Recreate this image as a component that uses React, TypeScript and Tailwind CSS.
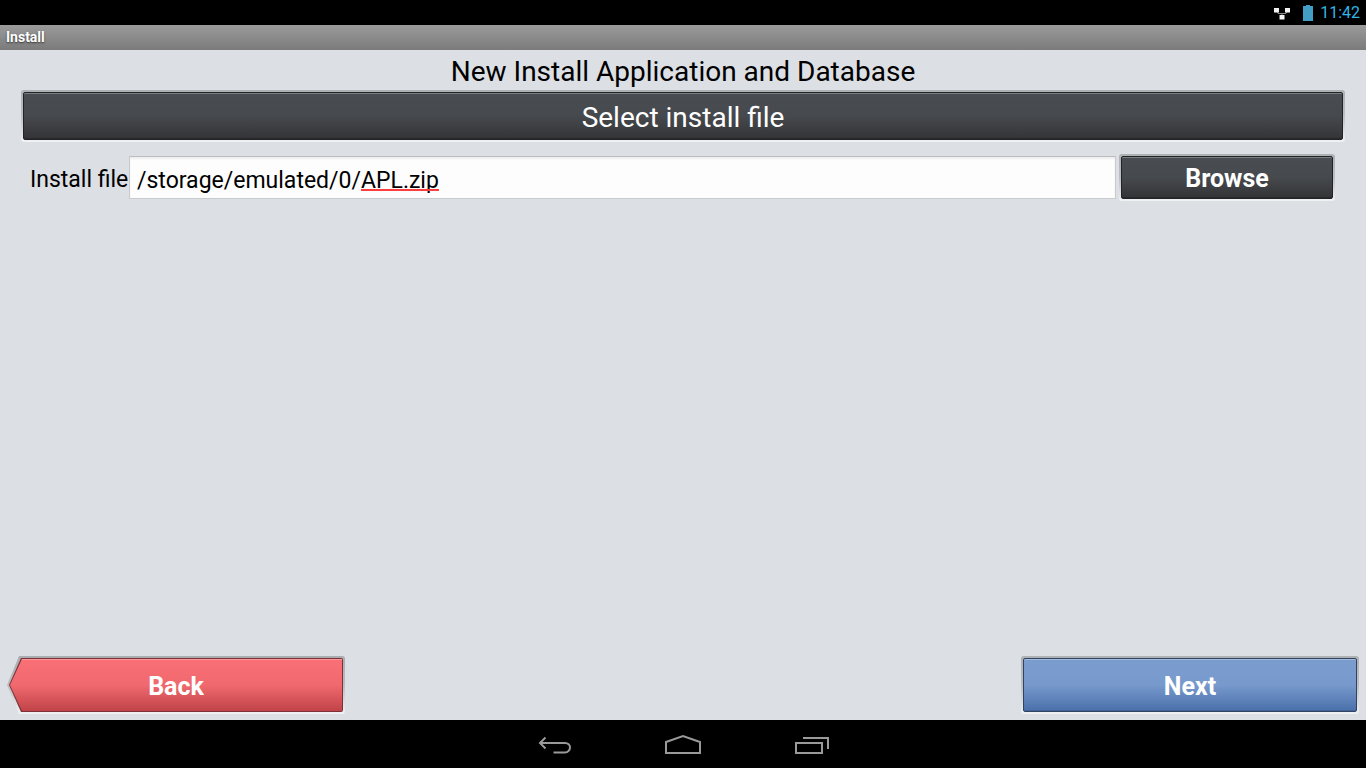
import React from "react";

const StatusBar = () => (
    <div className="flex h-[25px] items-center justify-end bg-black pr-[6px] text-[#33b5e5]">
        <svg className="h-[14px] w-[18px]" viewBox="0 0 18 14" fill="none">
            <path d="M3.500 5L5 7.500H13L14.500 5M9 7.500V10" stroke="#8a8a8a" />
            <path d="M1 2h5v4.500H1zM12 2h5v4.500h-5zM6.500 9h5v4.500h-5z" fill="#f2f2f2" />
        </svg>
        <svg className="ml-3 h-4 w-[10px]" viewBox="0 0 10 16">
            <path d="M3 0h4v1h3v15H0V1h3z" fill="#429ec5" />
        </svg>
        <span className="ml-[7px] text-base leading-6">11:42</span>
    </div>
);

type PanelButtonProps = {
    children: React.ReactNode;
    className?: string;
    tone?: "dark" | "blue";
};

// bevelled button: grey shadow on top, white glow below, thin dark outline
const PanelButton = ({ children, className = "", tone = "dark" }: PanelButtonProps) => {
    const face =
        tone === "dark"
            ? "border-[#222327] bg-linear-to-b from-[#494c50] via-[#46494d] to-[#343437] shadow-[inset_0_1px_0_#7b7f80,inset_0_-1px_0_#29292c]"
            : "border-[#32435f] bg-linear-to-b from-[#7b9dce] via-[#7799cc] to-[#4a70aa] shadow-[inset_0_1px_0_#a3bbdd,inset_0_-1px_0_#40639a]";
    return (
        <button
            type="button"
            className={`block rounded-[3px] bg-linear-to-b from-[#adb1b4] via-[#bcbfc3] to-[#f1f2f4] p-[2px] text-white ${className}`}
        >
            <span className={`flex h-full items-center justify-center rounded-[2px] border pt-[3px] ${face}`}>{children}</span>
        </button>
    );
};

const BackButton = () => (
    <button
        type="button"
        className="h-[58px] w-1/4 rounded-r-[3px] bg-linear-to-b from-[#a9adb0] via-[#babdc0] to-[#f1f2f4] p-[2px] text-[25px] font-bold text-white [clip-path:polygon(12px_0,100%_0,100%_100%,12px_100%,0_50%)]"
    >
        <span className="block h-full rounded-r-[2px] bg-[#7d3239] p-[1px] [clip-path:polygon(12px_0,100%_0,100%_100%,12px_100%,0_50%)]">
            <span className="flex h-full items-center justify-center bg-linear-to-b from-[#f97077] via-[#f0696e] to-[#c14448] pt-[3px] shadow-[inset_0_1px_0_#fb969b] [clip-path:polygon(12px_0,100%_0,100%_100%,12px_100%,0_50%)]">
                Back
            </span>
        </span>
    </button>
);

const NavBar = () => (
    <nav className="flex h-12 items-center justify-center gap-[93px] bg-black text-[#9a9a9a]">
        <button type="button" aria-label="Back">
            <svg className="h-6 w-9" viewBox="0 0 36 24" fill="none" stroke="currentColor" strokeWidth="2">
                <path d="M9.500 5.500L4 11L9.500 16.500M4 11H29C32 11 34 13 34 15.500S32 20.500 29 20.500H17.500" />
            </svg>
        </button>
        <button type="button" aria-label="Home">
            <svg className="h-6 w-9" viewBox="0 0 36 24" fill="none" stroke="currentColor" strokeWidth="2">
                <path d="M1 21V10L18 4L35 10V21Z" />
            </svg>
        </button>
        <button type="button" aria-label="Recent apps">
            <svg className="h-6 w-9" viewBox="0 0 36 24" fill="none" stroke="currentColor" strokeWidth="2">
                <path d="M2 11H28V21H2ZM9 6H34V17" />
            </svg>
        </button>
    </nav>
);

export default function App() {
    const [file, setFile] = React.useState("/storage/emulated/0/APL.zip");

    return (
        <div className="flex min-h-screen flex-col bg-[#dcdfe3] font-[Roboto,sans-serif] text-black">
            <StatusBar />
            <header className="flex h-[25px] items-center bg-linear-to-b from-[#9b9b9b] to-[#7b7b7b] px-[6px] pb-[2px] text-sm font-bold text-white [text-shadow:0_1px_2px_#333]">
                Install
            </header>

            <main className="flex grow flex-col">
                <h1 className="pt-1 text-center text-[28px] leading-9">New Install Application and Database</h1>
                <div className="flex flex-col px-[21px]">
                    <PanelButton className="h-[52px] w-full text-[28px]">Select install file</PanelButton>
                </div>

                <div className="mt-3 flex items-center pr-[31px] pl-[30px]">
                    <label htmlFor="file" className="w-[99px] shrink-0 pt-[6px] text-[23px]">
                        Install file
                    </label>
                    <div className="relative grow">
                        <input
                            id="file"
                            type="text"
                            spellCheck={false}
                            value={file}
                            onChange={(e) => setFile(e.target.value)}
                            className="block h-[43px] w-full border border-[#c8cbce] border-t-[#b9bdc0] bg-[#fdfdfd] px-[7px] pt-[6px] text-[23px] shadow-[inset_0_2px_2px_#eeeeef] outline-none"
                        />
                        {/* spelling mark under the file name */}
                        <span className="absolute bottom-2 left-[232px] h-[2px] w-[78px] bg-[#fb3f3f]" />
                    </div>
                    <PanelButton className="ml-[3px] h-[47px] w-[216px] shrink-0 text-[25px] font-bold">Browse</PanelButton>
                </div>

                <div className="mt-auto flex justify-between px-[7px] pb-[6px]">
                    <BackButton />
                    <PanelButton tone="blue" className="h-[58px] w-1/4 text-[25px] font-bold">
                        Next
                    </PanelButton>
                </div>
            </main>

            <NavBar />
        </div>
    );
}
